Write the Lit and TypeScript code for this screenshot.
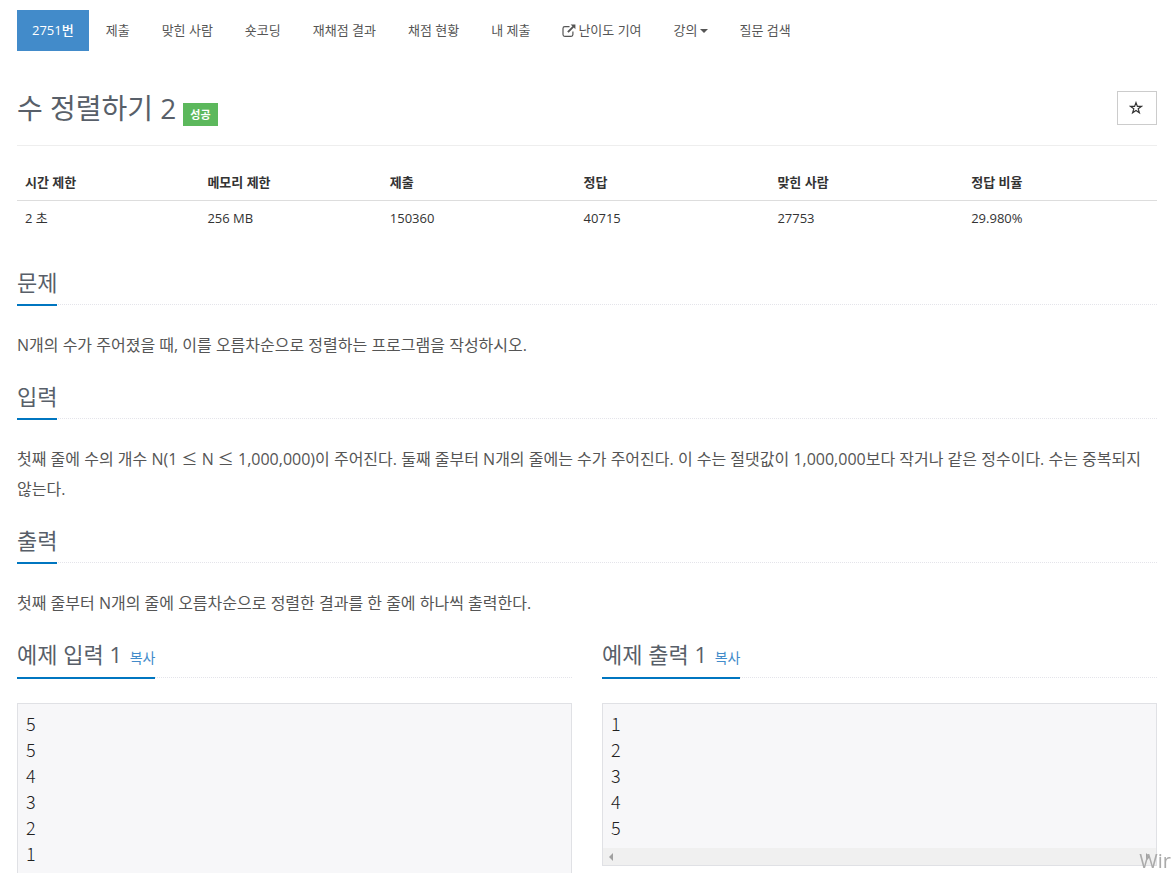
import { LitElement, html, css, svg } from "lit";
import { customElement, property } from "lit/decorators.js";

const externalIcon = svg`<path d="M10.9 7.6v3a1.8 1.8 0 0 1-1.8 1.8H2.8A1.8 1.8 0 0 1 1 10.6V4.4a1.8 1.8 0 0 1 1.8-1.8h4.7" fill="none" stroke="currentColor" stroke-width="1.2"/><path d="M8.6 .4H13.4v4.8l-1.6-1.6-5.2 5.2-1.4-1.4 5.2-5.2z" fill="currentColor"/>`;

@customElement("section-heading")
export class SectionHeading extends LitElement {
  static styles = css`
    :host {
      display: block;
      margin-bottom: 25px;
      border-bottom: 1px dotted #e4e4ea;
    }
    .title {
      display: inline-block;
      vertical-align: top;
      margin: 0 0 -2px;
      padding-bottom: 5px;
      border-bottom: 2px solid #0076c0;
      font-size: 22px;
      line-height: 33px;
      font-weight: 400;
      color: #585f69;
    }
    .copy {
      margin-left: 2px;
      padding: 0;
      border: 0;
      background: none;
      font: inherit;
      font-size: 14px;
      line-height: 28px;
      color: #428bca;
      cursor: pointer;
    }
  `;
  @property() text = "";
  @property({ type: Boolean }) copyable = false;

  render() {
    return html`<h2 class="title">${this.text}${this.copyable ? html` <button class="copy" type="button">복사</button>` : ""}</h2>`;
  }
}

@customElement("sample-box")
export class SampleBox extends LitElement {
  static styles = css`
    :host {
      display: block;
      border: 1px solid #e0e1e5;
      background: #f7f7f9;
    }
    .data {
      margin: 0;
      padding: 6px 8px 8px;
      font-family: "Noto Sans CJK KR", sans-serif;
      font-size: 18px;
      font-weight: 300;
      line-height: 26px;
      color: #222;
    }
    .track {
      display: flex;
      justify-content: space-between;
      align-items: center;
      height: 17px;
      padding: 0 6px;
      background: #f0f0f0;
    }
    .arrow {
      width: 4px;
      height: 8px;
      fill: #a0a0a0;
    }
  `;
  @property({ attribute: false }) lines: string[] = [];

  render() {
    return html`
      <pre class="data">${this.lines.join("\n")}</pre>
      <div class="track" aria-hidden="true">
        <svg class="arrow" viewBox="0 0 4 8"><path d="M4 0v8L0 4z" /></svg>
        <svg class="arrow" viewBox="0 0 4 8"><path d="M0 0v8l4-4z" /></svg>
      </div>
    `;
  }
}

@customElement("app-root")
export class AppRoot extends LitElement {
  static styles = css`
    :host {
      display: block;
      padding: 10px 14px 20px 17px;
      font-family: "Open Sans", "Noto Sans CJK KR", sans-serif;
      font-size: 13px;
      line-height: 21px;
      color: #333;
      background: #fff;
    }
    .nav {
      display: flex;
      flex-wrap: wrap;
      gap: 2px;
      margin: 0;
      padding: 0;
      list-style: none;
    }
    .link {
      display: flex;
      align-items: center;
      padding: 10px 15px;
      color: #555;
      text-decoration: none;
    }
    .link.active {
      background: #428bca;
      color: #fff;
      font-weight: 500;
    }
    .external {
      width: 14px;
      height: 14px;
      margin-right: 2px;
    }
    .caret {
      margin-left: 2px;
      border-top: 4px solid currentColor;
      border-left: 4px solid transparent;
      border-right: 4px solid transparent;
    }
    .header {
      display: flex;
      justify-content: space-between;
      align-items: center;
      margin-top: 30px;
      padding: 9px 0 19px;
      border-bottom: 1px solid #eee;
    }
    .name {
      display: flex;
      align-items: flex-end;
      gap: 7px;
    }
    .problem {
      margin: 0;
      font-size: 28px;
      line-height: 36px;
      font-weight: 400;
      color: #585f69;
    }
    .badge {
      padding: 1px 7px;
      background: #5cb85c;
      color: #fff;
      font-size: 11px;
      font-weight: 700;
    }
    .star {
      width: 40px;
      height: 34px;
      padding: 0 2px 0 0;
      border: 1px solid #ccc;
      background: #fff;
      color: #333;
      cursor: pointer;
    }
    .star-icon {
      display: block;
      width: 14px;
      height: 14px;
      margin: 0 auto;
    }
    .limits {
      width: 100%;
      margin: 19px 0 30px;
      table-layout: fixed;
      border-collapse: collapse;
      text-align: left;
    }
    .limits th,
    .limits td {
      box-sizing: border-box;
      padding: 7px 8px;
    }
    .limits th {
      border-bottom: 1px solid #ddd;
      font-weight: 700;
    }
    .limits .narrow {
      width: 16%;
    }
    .text {
      margin: 0 0 20px;
      font-size: 16px;
      line-height: 30px;
      color: #555;
    }
    .math {
      font-family: "Noto Sans CJK KR", sans-serif;
      line-height: 20px;
    }
    .samples {
      display: grid;
      grid-template-columns: 1fr 1fr;
      align-items: start;
      gap: 30px;
    }
    .watermark {
      position: fixed;
      right: 0;
      bottom: 0;
      font-size: 20px;
      line-height: 24px;
      color: #aaa;
      pointer-events: none;
    }
  `;

  render() {
    const links = ["제출", "맞힌 사람", "숏코딩", "재채점 결과", "채점 현황", "내 제출"];
    return html`
      <nav>
        <ul class="nav">
          <li><a class="link active" href="#">2751번</a></li>
          ${links.map((label) => html`<li><a class="link" href="#">${label}</a></li>`)}
          <li>
            <a class="link" href="#"><svg class="external" viewBox="0 0 14 14">${externalIcon}</svg>난이도 기여</a>
          </li>
          <li><a class="link" href="#">강의<span class="caret"></span></a></li>
          <li><a class="link" href="#">질문 검색</a></li>
        </ul>
      </nav>
      <main>
        <header class="header">
          <div class="name">
            <h1 class="problem">수 정렬하기 2</h1>
            <span class="badge">성공</span>
          </div>
          <button class="star" type="button" aria-label="즐겨찾기">
            <svg class="star-icon" viewBox="0 0 14 14">
              <path d="M7 1.6l1.4 3.8h4L9.2 7.8l1.2 4L7 9.5l-3.4 2.3 1.2-4L1.6 5.4h4z" fill="none" stroke="currentColor" stroke-width="1.2" />
            </svg>
          </button>
        </header>
        <table class="limits">
          <thead>
            <tr>
              <th class="narrow">시간 제한</th>
              <th class="narrow">메모리 제한</th>
              <th>제출</th>
              <th>정답</th>
              <th>맞힌 사람</th>
              <th>정답 비율</th>
            </tr>
          </thead>
          <tbody>
            <tr>
              <td>2 초</td>
              <td>256 MB</td>
              <td>150360</td>
              <td>40715</td>
              <td>27753</td>
              <td>29.980%</td>
            </tr>
          </tbody>
        </table>
        <section-heading text="문제"></section-heading>
        <p class="text">N개의 수가 주어졌을 때, 이를 오름차순으로 정렬하는 프로그램을 작성하시오.</p>
        <section-heading text="입력"></section-heading>
        <p class="text">
          첫째 줄에 수의 개수 N(1 <span class="math">≤</span> N <span class="math">≤</span> 1,000,000)이 주어진다. 둘째 줄부터 N개의 줄에는 수가
          주어진다. 이 수는 절댓값이 1,000,000보다 작거나 같은 정수이다. 수는 중복되지 않는다.
        </p>
        <section-heading text="출력"></section-heading>
        <p class="text">첫째 줄부터 N개의 줄에 오름차순으로 정렬한 결과를 한 줄에 하나씩 출력한다.</p>
        <div class="samples">
          <section>
            <section-heading text="예제 입력 1" copyable></section-heading>
            <sample-box .lines=${["5", "5", "4", "3", "2", "1"]}></sample-box>
          </section>
          <section>
            <section-heading text="예제 출력 1" copyable></section-heading>
            <sample-box .lines=${["1", "2", "3", "4", "5"]}></sample-box>
          </section>
        </div>
      </main>
      <div class="watermark">Wir</div>
    `;
  }
}
